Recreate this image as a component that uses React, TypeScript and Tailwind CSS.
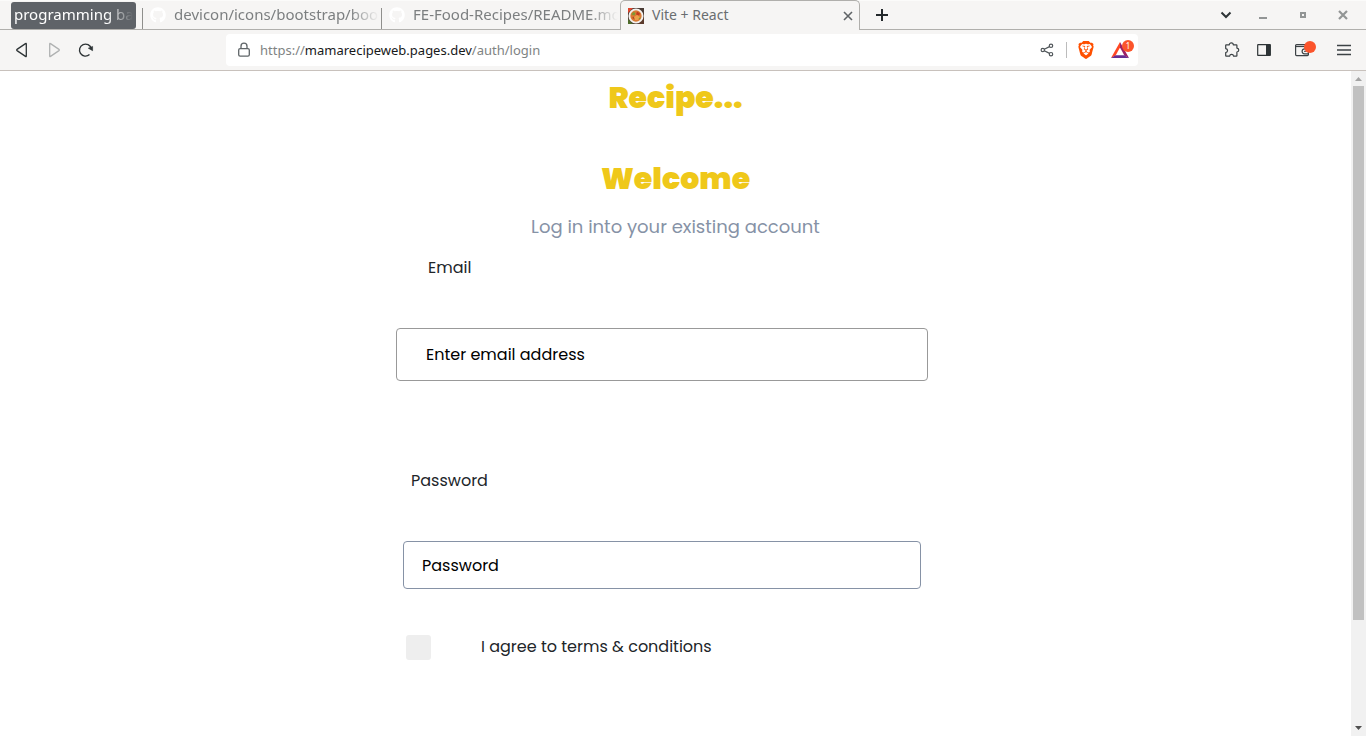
import React from "react";
import { FaGithub } from "react-icons/fa";
import { SiBrave } from "react-icons/si";

const chromeFont = "font-['Noto_Sans',sans-serif]";
const iconButton = "flex h-8 w-8 shrink-0 items-center justify-center";

function FoodIcon() {
  return (
    <svg width="16" height="16" viewBox="0 0 16 16" className="shrink-0" aria-hidden="true">
      <rect width="16" height="16" fill="#4a3b34" />
      <path d="M0 0h5L0 5z" fill="#e0452c" />
      <path d="M0 11l5 5H0z" fill="#4e6b2a" />
      <path d="M16 9v7h-6z" fill="#5b3a2c" />
      <circle cx="8" cy="8" r="6.600" fill="#d97a34" stroke="#f4f1ee" strokeWidth="1.900" />
      <path d="M3.500 6.500l2-2.500 2 1-1 2.500z" fill="#7d9a34" />
      <path d="M9 3.500l3 2-1 2-3-1z" fill="#c23a1f" />
      <path d="M4 10l2-1.500 1 3z" fill="#b5421f" />
      <path d="M6 9l3-2 3 2-2 3H7z" fill="#eba04a" />
      <path d="M10.500 10.500l2-1.500-.5 2.500z" fill="#7d9a34" />
    </svg>
  );
}

function Tab({ title }: { title: string }) {
  return (
    <button className="flex h-[27px] w-[239px] min-w-0 items-center text-[#7c7f80]">
      <span className="mt-[7px] h-[21px] w-px shrink-0 bg-[#8f8f8c]" />
      <FaGithub size={16} className="ml-[7px] mr-2 mt-px shrink-0 text-white" />
      <span className="min-w-0 flex-1 overflow-hidden whitespace-nowrap pb-[2px] text-left leading-5 [mask-image:linear-gradient(to_right,black_85%,transparent_99%)]">
        {title}
      </span>
    </button>
  );
}

function TabStrip() {
  return (
    <div className="flex h-[30px] border-t border-[#fbfbfa] bg-[#f6f5f4] text-[15px] leading-5">
      <div className="flex min-w-0 flex-1 border-b border-[#b0afac] pl-[11px]">
        <button className="mr-[6px] mt-px flex h-[27px] w-[125px] shrink-0 items-start overflow-hidden rounded-[3px] bg-[#5f6368] px-[3px] pt-[2px] text-left text-white">
          <span className="block w-full overflow-hidden whitespace-nowrap [mask-image:linear-gradient(to_right,black_78%,transparent)]">
            programming ba
          </span>
        </button>
        <Tab title="devicon/icons/bootstrap/boot" />
        <Tab title="FE-Food-Recipes/README.md" />
        <div className="-mb-px -mt-px flex h-[30px] w-60 shrink-0 items-center rounded-t-[5px] border border-b-0 border-[#b0afac] bg-[#f6f5f4] pl-[7px] pr-[3px] text-[#696d70]">
          <FoodIcon />
          <span className="flex-1 pb-px pl-2 text-sm">Vite + React</span>
          <button aria-label="Close tab" className="flex h-4 w-4 shrink-0 items-center justify-center">
            <svg width="10" height="10" viewBox="0 0 10 10" stroke="#5f6366" strokeWidth="1.600">
              <path d="M1 1l8 8M9 1L1 9" />
            </svg>
          </button>
        </div>
        <button aria-label="New tab" className="ml-[6px] flex w-8 shrink-0 items-center justify-center">
          <svg width="12" height="12" viewBox="0 0 12 12" stroke="#23282b" strokeWidth="2">
            <path d="M6 0v12M0 6h12" />
          </svg>
        </button>
        <div className="ml-auto flex shrink-0 items-center pr-[3px]">
          <button aria-label="Search tabs" className="flex h-6 w-[34px] items-center justify-center">
            <svg width="12" height="8" viewBox="0 0 12 8" fill="none" stroke="#2e3436" strokeWidth="2">
              <path d="M1.500 1.500L6 6l4.500-4.500" />
            </svg>
          </button>
          <button aria-label="Minimize" className="flex h-6 w-10 items-center justify-center">
            <span className="mt-[6px] h-[2px] w-2 bg-[#929595]" />
          </button>
          <button aria-label="Maximize" className="flex h-6 w-10 items-center justify-center">
            <span className="h-[6px] w-[6px] border-2 border-[#929595]" />
          </button>
          <button aria-label="Close window" className="flex h-6 w-10 items-center justify-center">
            <svg width="10" height="10" viewBox="0 0 10 10" stroke="#929595" strokeWidth="2.200">
              <path d="M1 1l8 8M9 1L1 9" />
            </svg>
          </button>
        </div>
      </div>
    </div>
  );
}

function Toolbar() {
  return (
    <div className="flex h-[41px] border-b border-[#c8c1bc] bg-[#f6f5f4]">
      <div className="flex h-10 w-[226px] shrink-0 items-center pl-[6px]">
        <button aria-label="Back" className={iconButton}>
          <svg width="14" height="16" viewBox="0 0 14 16" fill="none" stroke="#2e3436" strokeWidth="1.300" strokeLinejoin="round">
            <path d="M11.300 2v12q0 .9-.8.400L2 8.600Q1.200 8 2 7.400l8.500-5.800q.8-.5.8.4z" />
          </svg>
        </button>
        <button aria-label="Forward" className={iconButton}>
          <svg width="14" height="16" viewBox="0 0 14 16" fill="none" stroke="#b0b2b2" strokeWidth="1.300" strokeLinejoin="round">
            <path d="M2.700 2v12q0 .9.8.400L12 8.600q.8-.6 0-1.200L3.500 1.600q-.8-.5-.8.4z" />
          </svg>
        </button>
        <button aria-label="Reload" className={iconButton}>
          <svg width="16" height="16" viewBox="0 0 16 16" fill="none" stroke="#2e3436" strokeWidth="1.400">
            <path d="M11.500 12.600A6 6 0 1 1 13.300 6.600" />
            <path d="M10.300 6.200l4.300-1.800v4.300z" fill="#2e3436" strokeWidth="0.600" />
          </svg>
        </button>
      </div>
      <div className="mt-1 flex h-8 min-w-0 flex-1 items-center rounded bg-white">
        <div className="flex w-[34px] shrink-0 justify-center">
          <svg width="14" height="16" viewBox="0 0 14 16" fill="none" stroke="#5f6568" strokeWidth="1.300" className="ml-[2px]">
            <rect x="1.700" y="6.600" width="10.600" height="7.600" rx="1.400" />
            <path d="M4 6.500V4.200a3 3 0 0 1 6 0v2.300" />
          </svg>
        </div>
        <div className="min-w-0 flex-1 overflow-hidden whitespace-nowrap text-[13px] leading-5 text-[#808383]">
          https://<span className="text-[#17191a]">mamarecipeweb.pages.dev</span>/auth/login
        </div>
        <button aria-label="Share" className="flex h-8 w-[38px] shrink-0 items-center justify-center">
          <svg width="14" height="14" viewBox="0 0 14 14" fill="none" stroke="#50565a" strokeWidth="1.200">
            <circle cx="2.800" cy="7" r="1.700" />
            <circle cx="11" cy="2.800" r="1.700" />
            <circle cx="11" cy="11.200" r="1.700" />
            <path d="M4.300 6.200l5.200-2.600M4.300 7.800l5.200 2.600" />
          </svg>
        </button>
        <span className="h-4 w-px shrink-0 bg-[#bcbcbc]" />
        <button aria-label="Brave Shields" className="flex h-8 w-[38px] shrink-0 items-center justify-center">
          <SiBrave size={18} color="#ff5000" />
        </button>
        <button aria-label="Brave Rewards, 1 notification" className="relative h-8 w-[33px] shrink-0">
          <svg width="18" height="16" viewBox="0 0 18 16" className="absolute left-[6px] top-2" aria-hidden="true">
            <path d="M9 0L0 16l4.600-2.600L9 5.600z" fill="#ff4724" />
            <path d="M9 0l9 16-4.600-2.600L9 5.600z" fill="#9e1f63" />
            <path d="M0 16h18l-4.600-2.800H4.600z" fill="#662d91" />
          </svg>
          <span className="absolute left-[17px] top-[6px] flex h-3 w-3 items-center justify-center rounded-full bg-[#fb542b] text-[8px] leading-3 text-white">
            1
          </span>
        </button>
      </div>
      <div className="flex h-10 w-[228px] shrink-0 items-center justify-end pr-[6px]">
        <button aria-label="Extensions" className={iconButton}>
          <svg width="16" height="16" viewBox="0 0 16 16" fill="none" stroke="#3c4245" strokeWidth="1.200" strokeLinejoin="round">
            <path d="M2.200 2.800h3.100c0-2.600 4-2.600 4 0h3.100q.5 0 .5.500v2.800c2.500.2 2.500 3.700 0 3.900v3.700q0 .5-.5.500H9.600c-.3-2.400-3.700-2.400-4 0H2.200q-.5 0-.5-.5v-3.100c2.500-.3 2.500-3.700 0-4V3.300q0-.5.500-.5z" />
          </svg>
        </button>
        <button aria-label="Side panel" className={iconButton}>
          <svg width="14" height="14" viewBox="0 0 14 14" aria-hidden="true">
            <rect x="0.700" y="1.600" width="12.600" height="10.800" rx="0.500" fill="none" stroke="#2e3436" strokeWidth="1.200" />
            <path d="M9 1.500h4.500v11H9z" fill="#2e3436" />
          </svg>
        </button>
        <button aria-label="Wallet" className={iconButton + " relative ml-2"}>
          <svg width="14" height="14" viewBox="0 0 14 14" fill="none" stroke="#3c4245" strokeWidth="1.200" className="-ml-1">
            <path d="M13.400 5V2.500q0-.9-.9-.9H1.600q-1 0-1 1v9q0 1 1 1h10.800q1 0 1-1V11" />
            <path d="M.6 3.500h12.800" />
            <path d="M13.400 5.800H9.600a2.500 2.500 0 0 0 0 5h3.800z" />
            <path d="M9.200 8.300h1.600" />
          </svg>
          <span className="absolute left-4 top-[7px] h-3 w-3 rounded-full bg-[#fb542b]" />
        </button>
        <button aria-label="Menu" className={iconButton + " ml-2"}>
          <svg width="14" height="12" viewBox="0 0 14 12" stroke="#3c4245" strokeWidth="1.400">
            <path d="M0 1.500h14M0 6h14M0 10.500h14" />
          </svg>
        </button>
      </div>
    </div>
  );
}

function Scrollbar() {
  return (
    <div className="flex w-[15px] shrink-0 flex-col items-center bg-[#f1f1f1]" aria-hidden="true">
      <svg width="15" height="15" viewBox="0 0 15 15" className="shrink-0">
        <path d="M4 10l3.500-4 3.500 4z" fill="#a3a3a3" />
      </svg>
      <div className="w-[11px] flex-[534] bg-[#c1c1c1]" />
      <div className="flex-[101]" />
      <svg width="15" height="15" viewBox="0 0 15 15" className="shrink-0">
        <path d="M4 5l3.500 4L11 5z" fill="#505050" />
      </svg>
    </div>
  );
}

function LoginPage() {
  return (
    <main className="min-w-0 flex-1 overflow-hidden bg-white font-['Poppins',sans-serif] text-base leading-6 text-[#212529]">
      <header className="text-center text-[#efc81a]">
        <p className="text-[30px] font-black leading-[54px]">Recipe...</p>
        <h1 className="mt-[27px] text-[30px] font-black leading-[54px]">Welcome</h1>
        <p className="mt-[7px] text-lg leading-7 text-[#8692a6]">Log in into your existing account</p>
      </header>
      <form className="mx-auto mt-[15px] w-full max-w-[559px]">
        <label htmlFor="email" className="ml-8 block">
          Email
        </label>
        <input
          id="email"
          type="email"
          placeholder="Enter email address"
          className="mt-12 block h-[53px] w-full max-w-[532px] rounded border border-[#999] px-[29px] text-black placeholder:text-black placeholder:opacity-100"
        />
        <label htmlFor="password" className="ml-[15px] mt-[88px] block">
          Password
        </label>
        <input
          id="password"
          type="password"
          placeholder="Password"
          className="ml-[7px] mt-12 block h-12 w-full max-w-[518px] rounded border border-[#8692a6] px-[18px] text-black placeholder:text-black placeholder:opacity-100"
        />
        <div className="ml-[10px] mt-[46px] flex items-start">
          <input
            id="terms"
            type="checkbox"
            className="h-[25px] w-[25px] shrink-0 appearance-none rounded-[3px] bg-[#eee] checked:bg-[#efc81a]"
          />
          <label htmlFor="terms" className="ml-[50px]">
            I agree to terms &amp; conditions
          </label>
        </div>
      </form>
    </main>
  );
}

export default function App() {
  return (
    <div className={"flex h-screen flex-col overflow-hidden " + chromeFont}>
      <TabStrip />
      <Toolbar />
      <div className="flex min-h-0 flex-1">
        <LoginPage />
        <Scrollbar />
      </div>
    </div>
  );
}
